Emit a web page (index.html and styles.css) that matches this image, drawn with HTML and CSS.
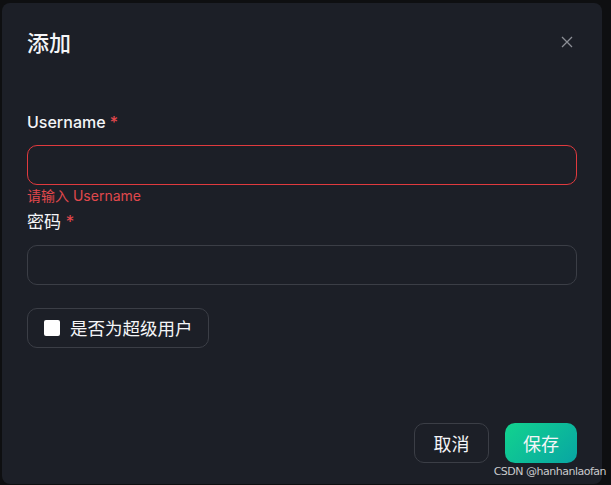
FILE: index.html
```html
<!DOCTYPE html>
<html lang="zh">
<head>
<meta charset="utf-8">
<link rel="stylesheet" href="styles.css">
</head>
<body>
<div class="modal">
  <div class="modal-header">
    <h2 class="title">添加</h2>
    <button class="close" aria-label="close">
      <svg width="12" height="12" viewBox="0 0 12 12"><path d="M1 1L11 11M11 1L1 11" stroke="#8b8e95" stroke-width="1.3" fill="none"/></svg>
    </button>
  </div>
  <form class="form">
    <div class="item">
      <label class="label">Username <span class="req">*</span></label>
      <input class="input input-error" type="text">
      <div class="error">请输入 Username</div>
    </div>
    <div class="item">
      <label class="label label-cjk">密码 <span class="req">*</span></label>
      <input class="input" type="password">
    </div>
    <label class="check-btn"><span class="box"></span><span class="check-text">是否为超级用户</span></label>
  </form>
  <div class="footer">
    <button class="btn btn-cancel" type="button">取消</button>
    <button class="btn btn-save" type="button">保存</button>
  </div>
  <div class="watermark">CSDN @hanhanlaofan</div>
</div>
</body>
</html>
```

FILE: styles.css
```css
html, body {
  margin: 0;
  padding: 0;
}
body {
  width: 611px;
  height: 485px;
  overflow: hidden;
  background: #0e0f11;
  font-family: Inter, "Noto Sans CJK SC", sans-serif;
  color: #f2f3f5;
  padding: 3px 0 0 2px;
  box-sizing: border-box;
}
.modal {
  position: relative;
  width: 600px;
  height: 481px;
  background: #1c1f27;
  border-radius: 8px;
  box-sizing: border-box;
  padding: 0 25px;
  display: flex;
  flex-direction: column;
}
.modal-header {
  display: flex;
  align-items: center;
  justify-content: space-between;
  height: 76px;
  margin-bottom: 2px;
}
.title {
  margin: 0;
  font-family: "Noto Sans CJK SC", sans-serif;
  font-size: 22px;
  font-weight: 500;
  line-height: 30px;
  color: #f4f5f7;
}
.close {
  background: none;
  border: 0;
  padding: 0;
  width: 12px;
  height: 12px;
  margin-right: 4px;
  margin-top: 2px;
  display: flex;
}
.form {
  display: flex;
  flex-direction: column;
  padding-top: 30px;
}
.item {
  display: flex;
  flex-direction: column;
}
.label {
  font-size: 16px;
  font-weight: 500;
  line-height: 22px;
  height: 22px;
  margin-bottom: 12px;
  color: #f4f5f7;
  font-family: Inter, "Noto Sans CJK SC", sans-serif;
}
.label-cjk {
  font-weight: 400;
  font-size: 17px;
}
.req {
  color: #e5484d;
}
.input {
  box-sizing: border-box;
  height: 40px;
  width: 100%;
  margin: 0;
  background: transparent;
  border: 1px solid #3b3e46;
  border-radius: 10px;
  outline: none;
}
.input-error {
  border-color: #e03a3e;
}
.error {
  font-size: 14px;
  line-height: 20px;
  height: 20px;
  color: #e0484c;
  margin: 1px 0 5px;
}
.check-btn {
  margin-top: 23px;
  align-self: flex-start;
  box-sizing: border-box;
  height: 40px;
  width: 182px;
  border: 1px solid #3b3e46;
  border-radius: 10px;
  display: flex;
  align-items: center;
  padding-left: 16px;
  gap: 10px;
}
.box {
  width: 16px;
  height: 16px;
  background: #ffffff;
  border-radius: 2px;
}
.check-text {
  font-family: "Noto Sans CJK SC", sans-serif;
  font-size: 17.5px;
  line-height: 22px;
  color: #f4f5f7;
}
.footer {
  margin-top: auto;
  margin-bottom: 21px;
  display: flex;
  justify-content: flex-end;
  gap: 16px;
}
.btn {
  box-sizing: border-box;
  height: 40px;
  border-radius: 10px;
  font-family: "Noto Sans CJK SC", sans-serif;
  font-size: 18px;
  font-weight: 400;
  color: #f4f5f7;
  padding: 0;
}
.btn-cancel {
  width: 75px;
  background: transparent;
  border: 1px solid #3b3e46;
}
.btn-save {
  width: 72px;
  border: 0;
  background: linear-gradient(135deg, #12d38e 0%, #08a5a3 100%);
}
.watermark {
  position: absolute;
  right: -4px;
  bottom: 5px;
  font-family: "DejaVu Sans", sans-serif;
  font-size: 11px;
  line-height: 14px;
  color: #c9cacc;
  letter-spacing: -0.5px;
}
```
